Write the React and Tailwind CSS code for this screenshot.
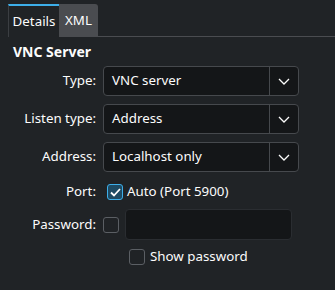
import React from "react";

const Chevron = () => (
  <svg width="12" height="7" viewBox="0 0 12 7" fill="none">
    <path d="M1 1 L6 6 L11 1" stroke="#fcfcfc" strokeWidth="1.3" />
  </svg>
);

const Combo = ({ value }) => (
  <div className="flex h-[30px] w-[196px] rounded-[4px] border border-[#46494d] bg-[#141618]">
    <div className="flex flex-1 items-center pl-[8px] text-[#fcfcfc]">{value}</div>
    <div className="flex w-[29px] items-center justify-center border-l border-[#46494d]">
      <Chevron />
    </div>
  </div>
);

const Check = ({ checked }) =>
  checked ? (
    <div className="flex h-[16px] w-[16px] items-center justify-center rounded-[3px] border border-[#3daee9] bg-[#1e4a63]">
      <svg width="11" height="9" viewBox="0 0 11 9" fill="none">
        <path d="M1 4.5 L4 7.5 L10 1" stroke="#ffffff" strokeWidth="1.8" />
      </svg>
    </div>
  ) : (
    <div className="h-[16px] w-[16px] rounded-[3px] border border-[#5b5f64] bg-[#202326]" />
  );

const Label = ({ children }) => (
  <div className="w-[96px] text-right text-[#fcfcfc]">{children}</div>
);

export default function App() {
  return (
    <div
      className="h-[290px] w-[335px] overflow-hidden bg-[#202326] text-[13.33px] text-[#fcfcfc]"
      style={{ fontFamily: '"Noto Sans", sans-serif' }}
    >
      <div className="flex h-[37px] pl-[8px] pt-[4px]">
        <div className="flex h-[33px] w-[51px] items-center justify-center border-l border-t-2 border-l-[#3b3e42] border-t-[#3daee9] bg-[#202326] pt-[1px]">
          Details
        </div>
        <div className="flex flex-1 flex-col">
          <div className="flex h-[32px] w-[39px] items-center justify-center rounded-tr-[3px] bg-[#4a4c50] pt-[2px]">
            XML
          </div>
          <div className="h-[1px] bg-[#4a4c50]" />
        </div>
      </div>
      <div className="pl-[13px] pt-[5px] text-[14px] font-bold leading-[20px]">VNC Server</div>
      <div className="mt-[4px] flex flex-col gap-[8px]">
        <div className="flex items-center gap-[7px]">
          <Label>Type:</Label>
          <Combo value="VNC server" />
        </div>
        <div className="flex items-center gap-[7px]">
          <Label>Listen type:</Label>
          <Combo value="Address" />
        </div>
        <div className="flex items-center gap-[7px]">
          <Label>Address:</Label>
          <Combo value="Localhost only" />
        </div>
      </div>
      <div className="mt-[12px] flex h-[16px] items-center">
        <Label>Port:</Label>
        <div className="ml-[11px] flex items-center gap-[4px]">
          <Check checked />
          <span>Auto (Port 5900)</span>
        </div>
      </div>
      <div className="mt-[9px] flex items-center">
        <Label>Password:</Label>
        <div className="ml-[7px]">
          <Check />
        </div>
        <div className="ml-[6px] h-[31px] w-[167px] rounded-[4px] border border-[#2a2d31] bg-[#141618]" />
      </div>
      <div className="mt-[7px] flex items-center gap-[5px] pl-[129px]">
        <Check />
        <span>Show password</span>
      </div>
    </div>
  );
}
